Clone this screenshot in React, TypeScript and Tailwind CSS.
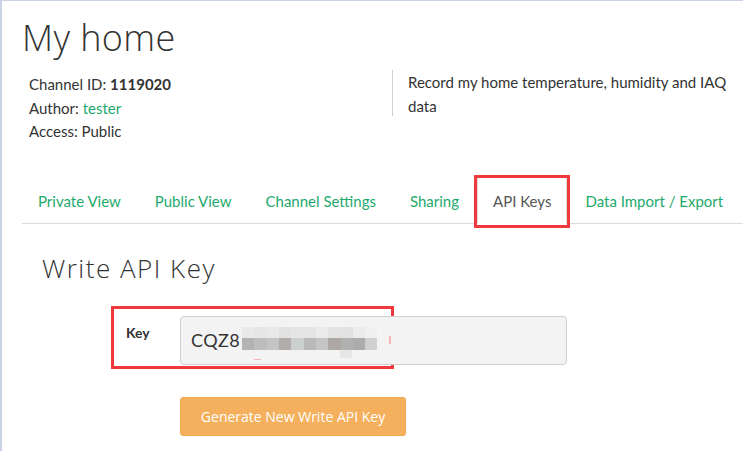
import React from "react";

const top = ["#e9e9e9", "#e6e6e6", "#e8e8e8", "#e2e2e2", "#e5e5e5", "#e4e4e4", "#ebebeb", "#e3e3e3", "#e2e2e2", "#ececec", "#f0f0f0"];
const bottom = ["#b3b3b3", "#bdbdbd", "#c4c4c4", "#b1adab", "#cbd1cf", "#b9b9b9", "#c6c4c4", "#ada8a6", "#b0b2b2", "#aeabab", "#cfd0d2"];

export default function App() {
  const sans = { fontFamily: "Lato, 'Open Sans', sans-serif" };
  const head = { fontFamily: "'Open Sans', Lato, sans-serif" };
  return (
    <div className="w-[743px] h-[459px] bg-white overflow-hidden">
      <div className="h-[451px] border-l-2 border-t border-[#c9d3e3] bg-white pl-[20px] text-[#333]" style={sans}>
        <h1 className="text-[36px] font-light leading-none pt-[19px] text-[#333] tracking-[0.4px]" style={head}>My home</h1>
        <div className="flex mt-[17px]">
          <div className="w-[370px] pl-[7px] text-[15px] leading-[23.5px]">
            <div>Channel ID: <span className="font-bold">1119020</span></div>
            <div>Author: <span className="text-[#1daa6c]">tester</span></div>
            <div>Access: Public</div>
          </div>
          <div className="border-l border-[#d0d0d0] h-[46px] mt-[-3px]"></div>
          <div className="pl-[15px] pr-[10px] text-[15px] leading-[23.5px] w-[345px] -mt-[2px]">
            Record my home temperature, humidity and IAQ data
          </div>
        </div>
        <div className="mt-[33px] flex border-b border-[#dcdcdc] h-[47px] items-end text-[15px]">
          {["Private View", "Public View", "Channel Settings", "Sharing"].map((t) => (
            <div key={t} className="px-[16px] mr-[2px] h-[46px] pt-[3px] flex items-center text-[#1daa6c]">{t}</div>
          ))}
          <div className="relative px-[15px] mr-[2px] h-[47px] -mb-px pt-[3px] flex items-center text-[#555] bg-white border border-[#dcdcdc] border-b-white rounded-t-[3px]">
            API Keys
            <div className="absolute left-[-4px] right-[-4px] top-[-3px] bottom-[-5px] border-[3px] border-[#f0393e]"></div>
          </div>
          <div className="px-[16px] h-[46px] pt-[3px] flex items-center text-[#1daa6c]">Data Import / Export</div>
        </div>
        <h2 className="mt-[31px] ml-[20px] text-[26px] font-light leading-none text-[#333] tracking-[1.5px]" style={head}>Write API Key</h2>
        <div className="relative mt-[35px] ml-[158px] flex items-center">
          <div className="absolute left-[-69px] top-[-10px] w-[283px] h-[63px] border-[3px] border-[#f0393e]"></div>
          <div className="absolute left-[-54px] top-[6px] text-[14px] font-bold text-[#333]">Key</div>
          <div className="relative w-[387px] h-[49px] bg-[#f3f3f3] border border-[#cfcfcf] rounded-[4px] flex items-center pl-[10px]">
            <span className="text-[18px] text-[#333] tracking-[0.5px]">CQZ8</span>
            <div className="flex flex-col ml-[2px] mt-[4px]">
              <div className="flex">
                {top.map((c, i) => (
                  <div key={i} className="w-[12.3px] h-[11px]" style={{ backgroundColor: c }}></div>
                ))}
              </div>
              <div className="flex">
                {bottom.map((c, i) => (
                  <div key={i} className="w-[12.3px] h-[12px]" style={{ backgroundColor: c }}></div>
                ))}
              </div>
              <div className="flex">
                <div className="ml-[98px] w-[12px] h-[8px] bg-[#e6e6e6]"></div>
              </div>
            </div>
            <div className="ml-[12px] w-[2px] h-[8px] bg-[#f5b5b5]"></div>
            <div className="absolute left-[73px] top-[42px] w-[7px] h-[1px] bg-[#f3b5b5]"></div>
          </div>
        </div>
        <button className="mt-[32px] ml-[158px] w-[226px] h-[39px] rounded-[3px] bg-[#f4b05c] text-white text-[14px] border border-[#eea84f]" style={head}>
          Generate New Write API Key
        </button>
      </div>
    </div>
  );
}
